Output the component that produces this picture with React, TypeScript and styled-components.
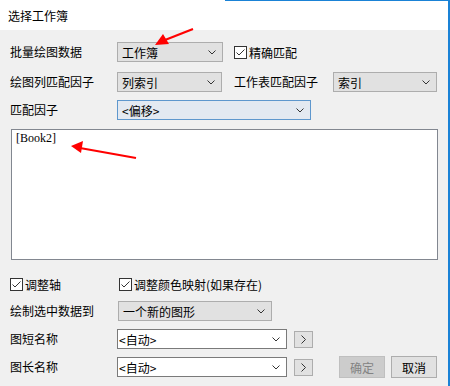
import React from "react";
import styled, { createGlobalStyle } from "styled-components";

const Global = createGlobalStyle`
  html, body { margin: 0; padding: 0; background: #f0f0f0; }
  body { font-family: "Noto Sans CJK SC", "Noto Sans", sans-serif; font-size: 12px; color: #000; }
`;

const Window = styled.div`
  position: relative;
  width: 450px;
  height: 386px;
  box-sizing: border-box;
  border-right: 2px solid #1a82d6;
  background: #f0f0f0;
  overflow: hidden;
`;

const TitleBar = styled.div`
  position: relative;
  height: 30px;
  background: #fff;
  display: flex;
  align-items: center;
  padding-left: 8px;
  font-size: 12px;
  &::before {
    content: "";
    position: absolute;
    top: 0;
    left: 225px;
    right: 0;
    height: 1px;
    background: #1a82d6;
  }
`;

const Body = styled.div`
  display: flex;
  flex-direction: column;
  padding: 12px 0 0 10px;
`;

const Row = styled.div<{ $mt?: number; $h?: number }>`
  display: flex;
  align-items: center;
  height: ${(p) => p.$h ?? 20}px;
  margin-top: ${(p) => p.$mt ?? 0}px;
`;

const Label = styled.div<{ $w?: number; $ml?: number }>`
  width: ${(p) => p.$w ?? 107}px;
  margin-left: ${(p) => p.$ml ?? 0}px;
  flex: none;
  line-height: 20px;
  white-space: nowrap;
`;

type ComboVariant = "gray" | "focus" | "white";

const ComboBox = styled.div<{ $w: number; $v?: ComboVariant; $ml?: number }>`
  box-sizing: border-box;
  width: ${(p) => p.$w}px;
  height: 20px;
  margin-left: ${(p) => p.$ml ?? 0}px;
  flex: none;
  display: flex;
  align-items: center;
  justify-content: space-between;
  padding: 0 6px 0 ${(p) => (p.$v === "white" ? 1 : 4)}px;
  border: 1px solid
    ${(p) => (p.$v === "focus" ? "#5e97cd" : p.$v === "white" ? "#7a7a7a" : "#adadad")};
  background: ${(p) => (p.$v === "focus" ? "#e3e9f1" : p.$v === "white" ? "#fff" : "#e1e1e1")};
  white-space: nowrap;
`;

const Chevron = () => (
  <svg width="8" height="5" viewBox="0 0 8 5">
    <path d="M0.5 0.5 L4 4 L7.5 0.5" fill="none" stroke="#333" strokeWidth="1" />
  </svg>
);

const Check = styled.span`
  box-sizing: border-box;
  width: 13px;
  height: 13px;
  flex: none;
  border: 1px solid #333;
  background: #fff;
  display: inline-flex;
  align-items: center;
  justify-content: center;
  margin-right: 2px;
`;

const CheckItem = styled.div<{ $ml?: number }>`
  display: flex;
  align-items: center;
  margin-left: ${(p) => p.$ml ?? 0}px;
  white-space: nowrap;
`;

const CheckBox = ({ label, ml }: { label: string; ml?: number }) => (
  <CheckItem $ml={ml}>
    <Check>
      <svg width="11" height="11" viewBox="0 0 11 11">
        <path d="M1.5 5.5 L4 8 L9.5 2.5" fill="none" stroke="#333" strokeWidth="1" />
      </svg>
    </Check>
    {label}
  </CheckItem>
);

const ListBox = styled.div`
  box-sizing: border-box;
  width: 427px;
  height: 131px;
  margin-top: 9px;
  margin-left: 1px;
  border: 1px solid #828790;
  background: #fff;
  padding: 1px 0 0 4px;
  font-family: "Liberation Serif", "DejaVu Serif", serif;
  font-size: 12px;
  line-height: 14px;
`;

const SmallButton = styled.div`
  box-sizing: border-box;
  width: 19px;
  height: 17px;
  margin-left: 7px;
  flex: none;
  display: flex;
  align-items: center;
  justify-content: center;
  border: 1px solid #adadad;
  background: #e1e1e1;
`;

const Button = styled.div<{ $disabled?: boolean; $ml?: number }>`
  box-sizing: border-box;
  width: 46px;
  height: 22px;
  margin-left: ${(p) => p.$ml ?? 0}px;
  flex: none;
  display: flex;
  align-items: center;
  justify-content: center;
  border: 1px solid ${(p) => (p.$disabled ? "#bfbfbf" : "#adadad")};
  background: ${(p) => (p.$disabled ? "#cccccc" : "#e1e1e1")};
  color: ${(p) => (p.$disabled ? "#838383" : "#000")};
  font-size: 12px;
`;

const Overlay = styled.svg`
  position: absolute;
  left: 0;
  top: 0;
  pointer-events: none;
`;

const RightArrow = () => (
  <svg width="7" height="9" viewBox="0 0 7 9">
    <path d="M1.5 0.5 L5.5 4.5 L1.5 8.5" fill="none" stroke="#333" strokeWidth="1" />
  </svg>
);

export default function App() {
  return (
    <>
      <Global />
      <Window>
        <TitleBar>选择工作簿</TitleBar>
        <Body>
          <Row>
            <Label>批量绘图数据</Label>
            <ComboBox $w={106}>
              工作簿
              <Chevron />
            </ComboBox>
            <CheckBox label="精确匹配" ml={11} />
          </Row>
          <Row $mt={10}>
            <Label>绘图列匹配因子</Label>
            <ComboBox $w={105}>
              列索引
              <Chevron />
            </ComboBox>
            <Label $w={99} $ml={12}>工作表匹配因子</Label>
            <ComboBox $w={104}>
              索引
              <Chevron />
            </ComboBox>
          </Row>
          <Row $mt={8}>
            <Label>匹配因子</Label>
            <ComboBox $w={194} $v="focus">
              &lt;偏移&gt;
              <Chevron />
            </ComboBox>
          </Row>
          <ListBox>[Book2]</ListBox>
          <Row $mt={14}>
            <CheckBox label="调整轴" />
            <CheckBox label="调整颜色映射(如果存在)" ml={58} />
          </Row>
          <Row $mt={7}>
            <Label $w={108}>绘制选中数据到</Label>
            <ComboBox $w={154}>
              一个新的图形
              <Chevron />
            </ComboBox>
          </Row>
          <Row $mt={8}>
            <Label>图短名称</Label>
            <ComboBox $w={170} $v="white">
              &lt;自动&gt;
              <Chevron />
            </ComboBox>
            <SmallButton>
              <RightArrow />
            </SmallButton>
          </Row>
          <Row $mt={8}>
            <Label>图长名称</Label>
            <ComboBox $w={170} $v="white">
              &lt;自动&gt;
              <Chevron />
            </ComboBox>
            <SmallButton>
              <RightArrow />
            </SmallButton>
            <Button $disabled $ml={26}>确定</Button>
            <Button $ml={6}>取消</Button>
          </Row>
        </Body>
        <Overlay width="450" height="386" viewBox="0 0 450 386">
          <line x1="193" y1="29" x2="165" y2="40" stroke="#ff0000" strokeWidth="2.2" />
          <polygon points="155,45 163,34 169,44" fill="#ff0000" />
          <line x1="136" y1="158" x2="80" y2="148" stroke="#ff0000" strokeWidth="2.2" />
          <polygon points="71,146 83,141 81,153" fill="#ff0000" />
        </Overlay>
      </Window>
    </>
  );
}
